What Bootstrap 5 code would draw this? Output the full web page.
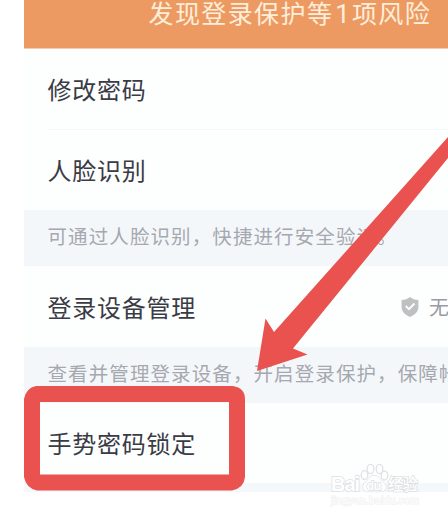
<!DOCTYPE html>
<html lang="zh-CN">
<head>
<meta charset="utf-8">
<meta name="viewport" content="width=device-width, initial-scale=1">
<title>安全中心</title>
<link href="https://cdn.jsdelivr.net/npm/bootstrap@5.3.0/dist/css/bootstrap.min.css" rel="stylesheet">
<style>
body{font-family:"Noto Sans CJK SC",sans-serif;background:#fff;height:518px}
.screen{margin-left:24px;height:518px;white-space:nowrap}
.risk{height:49px;background:#ed9a62;border-bottom:1px solid #f3cdb2;color:#fdeeda;font-size:25px;letter-spacing:1.4px;line-height:25px;padding-left:124.5px}
.risk span{font-family:Roboto,sans-serif;font-size:26px;letter-spacing:2px;margin-left:2px}
.item{height:81px;padding:1px 0 0 23.5px;font-size:24px;letter-spacing:.75px;color:#3a3b45;background:#fdfefe}
.item.top{height:80px;padding-top:0;padding-bottom:1px}
.item.last{height:80px;padding-top:0;padding-bottom:1px}
.rule{height:1px;margin-left:24px;background:#f5f6f8}
.note{height:56px;padding:0 0 4px 23.5px;background:#f4f7fa;color:#a6a8b0;font-size:19.5px;letter-spacing:1.1px}
.state{color:#999ba3;font-size:20px;letter-spacing:0;width:47px;gap:10px}
.foot{height:9px;background:#f5f8fb}
.overlay{left:0;top:0;pointer-events:none}
</style>
</head>
<body class="position-relative overflow-hidden">
<main class="screen overflow-hidden">
  <header class="risk">发现登录保护等<span>1</span>项风险</header>
  <section class="item top d-flex align-items-center">修改密码</section>
  <div class="rule"></div>
  <section class="item top d-flex align-items-center">人脸识别</section>
  <div class="note d-flex align-items-center">可通过人脸识别，快捷进行安全验证。</div>
  <section class="item d-flex align-items-center justify-content-between">
    <span>登录设备管理</span>
    <span class="state d-flex align-items-center flex-shrink-0">
      <svg width="18" height="20" viewBox="0 0 18 20" class="flex-shrink-0"><path d="M9 0C11.500 2 14 2.800 17.400 3V10C17.400 15 13.500 18 9 20 4.500 18 .6 15 .6 10V3C4 2.800 6.500 2 9 0Z" fill="#bfc0c2"/><path d="m4.800 9 3.200 3.200 5.500-5.700" fill="none" stroke="#fff" stroke-width="1.900"/></svg>
      <span>无</span>
    </span>
  </section>
  <div class="note d-flex align-items-center">查看并管理登录设备，开启登录保护，保障帐</div>
  <section class="item last d-flex align-items-center">手势密码锁定</section>
  <div class="foot"></div>
</main>
<svg class="overlay position-absolute" width="448" height="518" viewBox="0 0 448 518">
  <path fill-rule="evenodd" d="M36 386H233Q245 388 245 399V477Q244 488 232 490.500H37Q26 488 24 477V399Q26 388 36 386ZM40 402V474.500H229V402Z" fill="#ea524f"/>
  <path d="M448 137 274 332 265.500 318.500 257 371 307.500 354.500 293 348.500 448 158Z" fill="#ea524f"/>
  <g fill="#fff" stroke="#dcdfe2" stroke-width="1.500" paint-order="stroke" font-family="Liberation Sans, sans-serif" font-weight="700">
    <text x="331" y="491" font-size="20" textLength="29">Bai</text>
    <g fill="none" stroke="#e0e3e6" stroke-width="1.300">
      <ellipse cx="364.500" cy="475" rx="3.300" ry="4.500"/><ellipse cx="370.500" cy="469" rx="3.300" ry="4.600"/><ellipse cx="379.500" cy="469" rx="3.300" ry="4.600"/><ellipse cx="384.500" cy="475.500" rx="3.300" ry="4.500"/>
      <path d="M374 475.500c-4 0-5 4-8 6.500-5 4-3 9.500 2 9.500h13c5 0 7-5.500 2-9.500-3-2.500-5-6.500-9-6.500Z" fill="#fff"/>
    </g>
    <text x="366.500" y="489.500" font-size="13" textLength="15">du</text>
    <text x="388" y="490" font-size="15.500" font-family="Noto Sans CJK SC, sans-serif" font-weight="500" textLength="30">经验</text>
    <text x="331" y="504" font-size="10.500" stroke="#eceeef" stroke-width="1" font-weight="400" textLength="88">jingyan.baidu.com</text>
  </g>
</svg>
<script src="https://cdn.jsdelivr.net/npm/bootstrap@5.3.0/dist/js/bootstrap.bundle.min.js"></script>
</body>
</html>
